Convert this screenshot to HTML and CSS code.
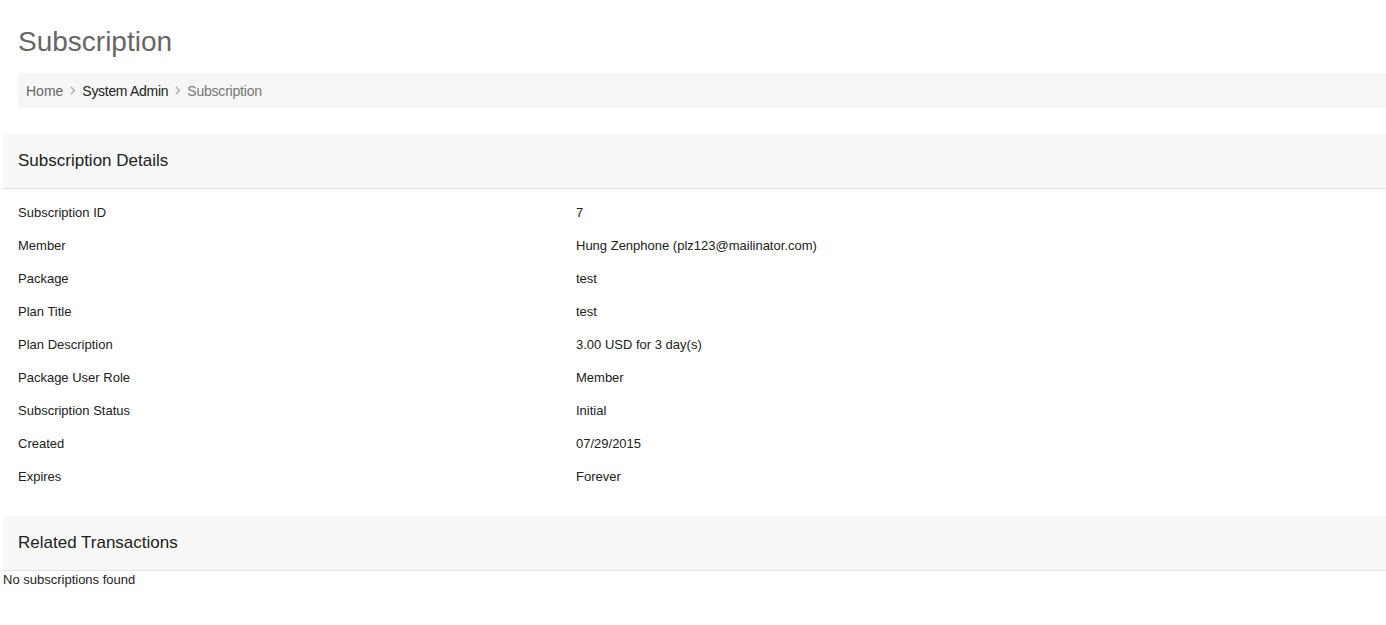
FILE: index.html
```html
<!DOCTYPE html>
<html>
<head>
<meta charset="utf-8">
<link rel="stylesheet" href="styles.css">
</head>
<body>
<div class="page">
  <div class="page-header">
    <h1 class="title">Subscription</h1>
    <ol class="breadcrumb">
      <li class="crumb link">Home</li>
      <li class="sep"><svg width="6" height="9" viewBox="0 0 6 9"><path d="M1 1l3.5 3.5L1 8" fill="none" stroke="#aaa" stroke-width="1.3"/></svg></li>
      <li class="crumb dark">System Admin</li>
      <li class="sep"><svg width="6" height="9" viewBox="0 0 6 9"><path d="M1 1l3.5 3.5L1 8" fill="none" stroke="#aaa" stroke-width="1.3"/></svg></li>
      <li class="crumb current">Subscription</li>
    </ol>
  </div>

  <div class="panel">
    <div class="panel-heading">Subscription Details</div>
    <div class="panel-body">
      <div class="row"><div class="label">Subscription ID</div><div class="value">7</div></div>
      <div class="row"><div class="label">Member</div><div class="value">Hung Zenphone (plz123@mailinator.com)</div></div>
      <div class="row"><div class="label">Package</div><div class="value">test</div></div>
      <div class="row"><div class="label">Plan Title</div><div class="value">test</div></div>
      <div class="row"><div class="label">Plan Description</div><div class="value">3.00 USD for 3 day(s)</div></div>
      <div class="row"><div class="label">Package User Role</div><div class="value">Member</div></div>
      <div class="row"><div class="label">Subscription Status</div><div class="value">Initial</div></div>
      <div class="row"><div class="label">Created</div><div class="value">07/29/2015</div></div>
      <div class="row"><div class="label">Expires</div><div class="value">Forever</div></div>
    </div>
  </div>

  <div class="panel">
    <div class="panel-heading">Related Transactions</div>
    <div class="empty">No subscriptions found</div>
  </div>
</div>
</body>
</html>
```
FILE: styles.css
```css
html, body {
  margin: 0;
  padding: 0;
  background: #fff;
}
body {
  font-family: "Liberation Sans", Arial, sans-serif;
  color: #333;
  font-size: 13px;
}
.page {
  padding: 0 0 0 3px;
}
.page-header {
  padding: 23px 0 0 15px;
}
.title {
  margin: 0;
  font-size: 28px;
  font-weight: normal;
  color: #666;
  line-height: 38px;
}
.breadcrumb {
  list-style: none;
  margin: 12px 0 0 0;
  padding: 0 8px;
  height: 35px;
  background: #f6f6f6;
  display: flex;
  align-items: center;
  font-size: 14px;
}
.crumb.link { color: #666; }
.crumb.dark { color: #222; letter-spacing: -0.3px; }
.crumb.current { color: #777; letter-spacing: -0.2px; }
.sep {
  display: flex;
  align-items: center;
  padding: 0 6px 0 7px;
}
.panel {
  margin-top: 26px;
}
.panel + .panel {
  margin-top: 23px;
}
.panel-heading {
  background: #f8f8f8;
  border-bottom: 1px solid #e3e3e3;
  height: 54px;
  display: flex;
  align-items: center;
  padding-left: 15px;
  font-size: 17px;
  color: #222;
}
.panel-body {
  padding: 7px 0 0 15px;
}
.row {
  display: flex;
  height: 33px;
  align-items: center;
  color: #222;
}
.label {
  width: 558px;
}
.empty {
  color: #222;
  line-height: 16px;
  padding-top: 1px;
}
```
